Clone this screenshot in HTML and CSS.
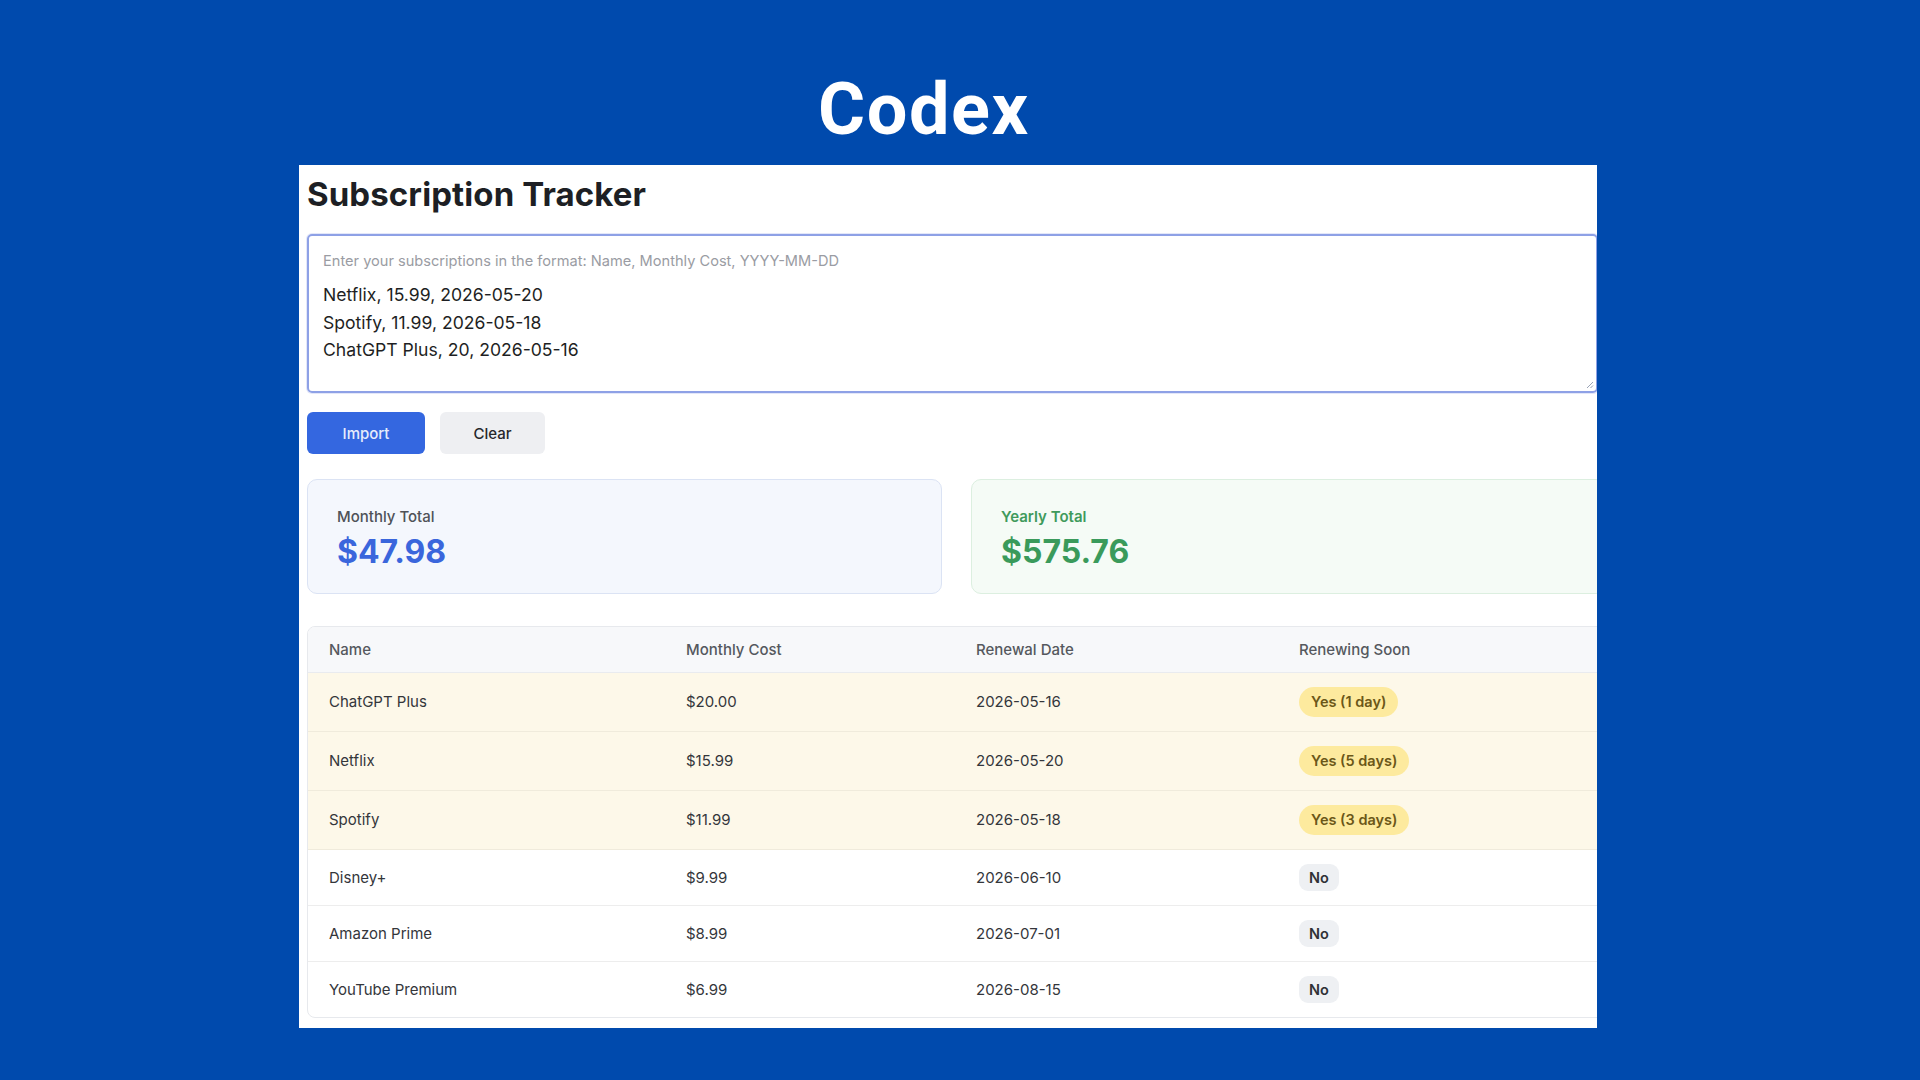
FILE: index.html
```html
<!DOCTYPE html>
<html lang="en">
<head>
<meta charset="utf-8">
<title>Codex – Subscription Tracker</title>
<link rel="stylesheet" href="styles.css">
</head>
<body>
<div class="page">
  <h1 class="brand">Codex</h1>
  <div class="panel">
    <div class="app">
      <h2 class="app-title">Subscription Tracker</h2>
      <div class="input-box">
        <div class="input-hint">Enter your subscriptions in the format: Name, Monthly Cost, YYYY-MM-DD</div>
        <div class="input-lines">
          <div>Netflix, 15.99, 2026-05-20</div>
          <div>Spotify, 11.99, 2026-05-18</div>
          <div>ChatGPT Plus, 20, 2026-05-16</div>
        </div>
        <svg class="grip" width="8" height="8" viewBox="0 0 8 8"><path d="M7 1 L1 7 M7 4.5 L4.5 7" stroke="#9aa3b5" stroke-width="1" fill="none"/></svg>
      </div>
      <div class="actions">
        <button class="btn btn-primary">Import</button>
        <button class="btn btn-secondary">Clear</button>
      </div>
      <div class="totals">
        <div class="card card-monthly">
          <div class="card-label">Monthly Total</div>
          <div class="card-value">$47.98</div>
        </div>
        <div class="card card-yearly">
          <div class="card-label">Yearly Total</div>
          <div class="card-value">$575.76</div>
        </div>
      </div>
      <div class="table-wrap">
        <table class="subs">
          <colgroup>
            <col class="c1"><col class="c2"><col class="c3"><col class="c4">
          </colgroup>
          <thead>
            <tr><th>Name</th><th>Monthly Cost</th><th>Renewal Date</th><th>Renewing Soon</th></tr>
          </thead>
          <tbody>
            <tr class="soon"><td>ChatGPT Plus</td><td>$20.00</td><td>2026-05-16</td><td><span class="badge badge-yes">Yes (1 day)</span></td></tr>
            <tr class="soon"><td>Netflix</td><td>$15.99</td><td>2026-05-20</td><td><span class="badge badge-yes">Yes (5 days)</span></td></tr>
            <tr class="soon"><td>Spotify</td><td>$11.99</td><td>2026-05-18</td><td><span class="badge badge-yes">Yes (3 days)</span></td></tr>
            <tr><td>Disney+</td><td>$9.99</td><td>2026-06-10</td><td><span class="badge badge-no">No</span></td></tr>
            <tr><td>Amazon Prime</td><td>$8.99</td><td>2026-07-01</td><td><span class="badge badge-no">No</span></td></tr>
            <tr><td>YouTube Premium</td><td>$6.99</td><td>2026-08-15</td><td><span class="badge badge-no">No</span></td></tr>
          </tbody>
        </table>
      </div>
    </div>
  </div>
</div>
</body>
</html>
```
FILE: styles.css
```css
html, body {
  margin: 0;
  padding: 0;
}
body {
  background: #004aad;
  width: 1920px;
  height: 1080px;
  overflow: hidden;
  font-family: Inter, "Liberation Sans", sans-serif;
}
.page {
  margin-left: 299px;
  width: 1298px;
}
.brand {
  margin: 0;
  padding: 74px 0 0 519px;
  height: 72px;
  font-family: Roboto, "Liberation Sans", sans-serif;
  font-weight: 700;
  font-size: 72px;
  line-height: 72px;
  letter-spacing: 1.6px;
  color: #ffffff;
  margin-bottom: 19px;
}
.panel {
  background: #ffffff;
  height: 863px;
  overflow: hidden;
}
.app {
  padding-left: 8px;
  width: 1300px;
}
.app-title {
  margin: 10px 0 0 0;
  font-size: 33px;
  line-height: 38px;
  font-weight: 700;
  color: #1d1f24;
  letter-spacing: 0.1px;
}
.input-box {
  position: relative;
  margin-top: 21px;
  width: 1291px;
  height: 159px;
  box-sizing: border-box;
  border: 2px solid #8ea1e6;
  border-radius: 5px;
  padding: 15px 13px 0 14px;
  box-shadow: 0 0 0 1px rgba(142, 161, 230, 0.25);
}
.input-hint {
  font-size: 14.6px;
  line-height: 20px;
  color: #9a9ca3;
}
.input-lines {
  margin-top: 10px;
  font-size: 17.6px;
  line-height: 27.5px;
  color: #1e1f23;
}
.grip {
  position: absolute;
  right: 2px;
  bottom: 2px;
}
.actions {
  display: flex;
  gap: 15px;
  margin-top: 19px;
}
.btn {
  height: 42px;
  border: none;
  border-radius: 6px;
  font-family: Inter, "Liberation Sans", sans-serif;
  font-size: 15px;
  font-weight: 500;
  padding: 0;
}
.btn-primary {
  width: 118px;
  background: #3467e0;
  color: #e6ecfb;
}
.btn-secondary {
  width: 105px;
  background: #eeeff2;
  color: #26272b;
}
.totals {
  display: grid;
  grid-template-columns: 635px 635px;
  gap: 29px;
  margin-top: 25px;
}
.card {
  height: 115px;
  box-sizing: border-box;
  border-radius: 10px;
  padding: 27px 29px 0 29px;
}
.card-monthly {
  background: #f4f7fd;
  border: 1px solid #dbe3f4;
}
.card-yearly {
  background: #f5fbf6;
  border: 1px solid #dcefe0;
}
.card-label {
  font-size: 15px;
  line-height: 20px;
  font-weight: 500;
}
.card-monthly .card-label { color: #4f5258; }
.card-yearly .card-label { color: #3f9a5c; font-weight: 600; }
.card-value {
  margin-top: 6px;
  font-size: 32px;
  line-height: 38px;
  font-weight: 700;
}
.card-monthly .card-value { color: #3a66dc; }
.card-yearly .card-value { color: #3a9a5b; }
.table-wrap {
  margin-top: 32px;
  width: 1300px;
  border: 1px solid #e7e9ed;
  border-radius: 8px;
  overflow: hidden;
}
.subs {
  width: 100%;
  border-collapse: collapse;
  table-layout: fixed;
  font-size: 15px;
}
.c1 { width: 357px; }
.c2 { width: 290px; }
.c3 { width: 323px; }
.subs th {
  height: 45px;
  padding: 0 21px;
  text-align: left;
  font-weight: 500;
  color: #55585e;
  background: #f7f8fa;
  border-bottom: 1px solid #e9ebef;
}
.subs td {
  padding: 14px 21px;
  line-height: 20px;
  color: #34363b;
  border-bottom: 1px solid #ededed;
  vertical-align: middle;
}
.subs tbody tr:last-child td {
  border-bottom: none;
}
.subs tr.soon td {
  background: #fdf8e9;
  border-bottom-color: #f0ebdc;
}
.badge {
  display: inline-block;
  padding: 0 10px;
  font-size: 14.5px;
  font-weight: 600;
  vertical-align: middle;
}
.badge-yes {
  height: 30px;
  line-height: 30px;
  padding: 0 12px;
  border-radius: 15px;
  background: #fdea9e;
  color: #6b5718;
}
.badge-no {
  height: 27px;
  line-height: 27px;
  border-radius: 9px;
  background: #eef0f3;
  color: #303236;
}
```
